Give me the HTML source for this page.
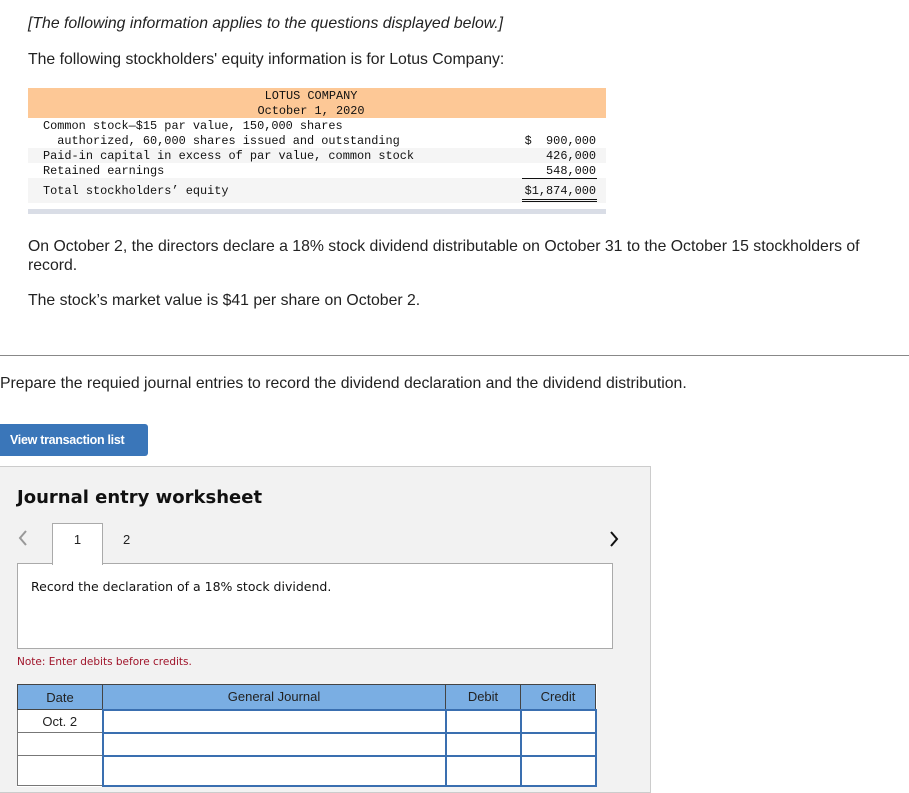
<!DOCTYPE html>
<html><head><style>
body{margin:0;width:909px;height:785px;overflow:hidden;background:#fff;position:relative;font-family:"Liberation Sans",Arial,sans-serif;color:#222}
.a{position:absolute;white-space:nowrap}
.m{font-family:"Liberation Mono","DejaVu Sans Mono",monospace;font-size:11.9px;color:#111}
.p{font-size:15.8px}
td{padding:0}
</style></head><body>
<div class="a p" style="left:28px;top:15px;font-style:italic">[The following information applies to the questions displayed below.]</div>
<div class="a p" style="left:28px;top:51px">The following stockholders' equity information is for Lotus Company:</div>

<div class="a" style="left:28px;top:88px;width:578px;height:30px;background:#fdc896"></div>
<div class="a m" style="left:28px;top:89px;width:566px;text-align:center;line-height:15px">LOTUS COMPANY<br>October 1, 2020</div>
<div class="a" style="left:28px;top:148px;width:578px;height:15px;background:#f5f5f5"></div>
<div class="a" style="left:28px;top:178px;width:578px;height:25px;background:#f5f5f5"></div>
<div class="a" style="left:28px;top:209px;width:578px;height:5px;background:#d9dde6"></div>
<div class="a m" style="left:43px;top:119px;line-height:15px">Common stock—$15 par value, 150,000 shares<br>&nbsp;&nbsp;authorized, 60,000 shares issued and outstanding<br>Paid-in capital in excess of par value, common stock<br>Retained earnings</div>
<div class="a m" style="left:43px;top:184px">Total stockholders’ equity</div>
<div class="a m" style="left:516px;top:134px;width:80px;text-align:right;line-height:15px">$&nbsp;&nbsp;900,000<br>426,000<br>548,000</div>
<div class="a" style="left:522px;top:178px;width:75px;border-top:1px solid #111"></div>
<div class="a m" style="left:516px;top:184px;width:80px;text-align:right">$1,874,000</div>
<div class="a" style="left:522px;top:199px;width:75px;height:1px;border-top:1px solid #111;border-bottom:1px solid #111"></div>

<div class="a p" style="left:28px;top:237px;line-height:19px">On October 2, the directors declare a 18% stock dividend distributable on October 31 to the October 15 stockholders of<br>record.</div>
<div class="a p" style="left:28px;top:292px">The stock’s market value is $41 per share on October 2.</div>
<div class="a" style="left:0;top:355px;width:909px;border-top:1px solid #888"></div>
<div class="a p" style="left:0;top:375px">Prepare the requied journal entries to record the dividend declaration and the dividend distribution.</div>
<div class="a" style="left:0;top:424px;width:148px;height:32px;background:#3a76b9;border-radius:0 3px 3px 0;color:#fff;font-weight:bold;font-size:12.5px;line-height:32px;text-indent:10px;letter-spacing:-0.3px">View transaction list</div>

<div class="a" style="left:0;top:466px;width:650px;height:325px;background:#f2f2f2;border:1px solid #ccc;border-left:none"></div>
<div class="a" style="left:17px;top:487px;font-family:'DejaVu Sans',sans-serif;font-weight:bold;font-size:18px;color:#111">Journal entry worksheet</div>
<svg class="a" style="left:16px;top:528px" width="14" height="20"><path d="M10 3 L4 10 L10 17" fill="none" stroke="#999" stroke-width="2"/></svg>
<div class="a" style="left:52px;top:523px;width:49px;height:41px;background:#fff;border:1px solid #aaa;border-bottom:none;z-index:2;text-align:center;font-size:13px;line-height:32px">1</div>
<div class="a" style="left:123px;top:532px;font-size:13px">2</div>
<svg class="a" style="left:607px;top:529px" width="14" height="20"><path d="M4 3 L10 10 L4 17" fill="none" stroke="#111" stroke-width="2"/></svg>
<div class="a" style="left:17px;top:563px;width:594px;height:84px;background:#fff;border:1px solid #aaa"></div>
<div class="a" style="left:31px;top:579px;font-family:'DejaVu Sans',sans-serif;font-size:12.5px;color:#111">Record the declaration of a 18% stock dividend.</div>
<div class="a" style="left:17px;top:656px;font-family:'DejaVu Sans',sans-serif;font-size:10.5px;color:#a0142a">Note: Enter debits before credits.</div>

<table class="a" style="left:17px;top:684px;border-collapse:collapse;font-size:13px;background:#fff">
<tr style="height:25px;background:#7aaee3;text-align:center;color:#222">
<td style="width:84px;border:1px solid #444">Date</td><td style="width:342px;border:1px solid #444">General Journal</td><td style="width:74px;border:1px solid #444">Debit</td><td style="width:74px;border:1px solid #444">Credit</td></tr>
<tr style="height:23px"><td style="border:1px solid #777;text-align:center">Oct. 2</td><td style="border:2px solid #3a6fb0"></td><td style="border:2px solid #3a6fb0"></td><td style="border:2px solid #3a6fb0"></td></tr>
<tr style="height:23px"><td style="border:1px solid #777"></td><td style="border:2px solid #3a6fb0"></td><td style="border:2px solid #3a6fb0"></td><td style="border:2px solid #3a6fb0"></td></tr>
<tr style="height:30px"><td style="border:1px solid #777"></td><td style="border:2px solid #3a6fb0"></td><td style="border:2px solid #3a6fb0"></td><td style="border:2px solid #3a6fb0"></td></tr>
</table>
</body></html>
